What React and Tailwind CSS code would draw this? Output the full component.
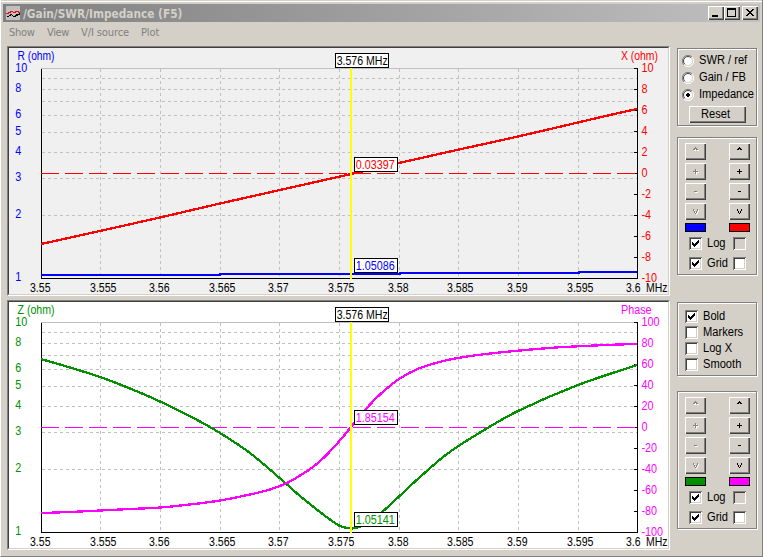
import clsx from 'clsx';

const GRID_X = [100, 160, 220, 279, 339, 399, 458, 518, 578];
const GRID_Y = [10, 21, 33, 47, 64, 84, 110, 147];

const LOG_LABELS = [
  ['10', 0, 4],
  ['8', 21, 3],
  ['6', 47, 3],
  ['5', 64, 3],
  ['4', 84, 3],
  ['3', 110, 3],
  ['2', 147, 3],
  ['1', 210, 3],
];

const FREQ_LABELS = [
  ['3.55', 30, 20.5],
  ['3.555', 90, 26.5],
  ['3.56', 149, 20.5],
  ['3.565', 209, 26.5],
  ['3.57', 268, 20.5],
  ['3.575', 328, 26.5],
  ['3.58', 388, 20.5],
  ['3.585', 447, 26.5],
  ['3.59', 507, 20.5],
  ['3.595', 567, 26.5],
  ['3.6', 626, 14.5],
  ['MHz', 646, 21.5],
];

const reactance = [[41, 244], [100, 231], [160, 217.5], [220, 203.5], [300, 185.5], [351, 174], [399, 163], [450, 151.5], [518, 136.5], [578, 122.5], [610, 115], [637, 109]];
const resistance = [[41, 275], [220, 275], [220, 274], [400, 274], [400, 273], [579, 273], [579, 272], [637, 272]];
const impedance = [[41, 359], [70, 367.5], [100, 377], [130, 388.5], [160, 401.5], [199, 421], [220, 433], [250, 453], [287, 484.5], [300, 496], [320, 512], [330, 519.5], [339, 525.5], [347, 528], [356, 528], [365, 524], [382, 512], [399, 496.5], [420, 477], [447, 454], [480, 432.5], [518, 411], [578, 385], [637, 365]];
const phase = [[41, 513], [70, 512], [100, 510.5], [130, 509], [160, 507.5], [190, 504.5], [220, 500.5], [250, 494.5], [270, 489.5], [287, 483], [300, 475.5], [313, 467], [325, 456.5], [339, 441.5], [351, 427], [365, 410], [380, 394.5], [399, 379], [420, 368], [450, 359.5], [478, 355], [520, 350.5], [556, 347.5], [578, 346.3], [610, 344.8], [637, 344]];

// Catmull-Rom through the sample points
function smooth(points) {
  let d = `M${points[0]}`;
  for (let i = 0; i < points.length - 1; i++) {
    const p0 = points[i - 1] || points[i];
    const p1 = points[i];
    const p2 = points[i + 1];
    const p3 = points[i + 2] || p2;
    const h = (p2[0] - p1[0]) / 3;
    const m1 = (p2[1] - p0[1]) / (p2[0] - p0[0]);
    const m2 = (p3[1] - p1[1]) / (p3[0] - p1[0]);
    d += `C${p1[0] + h},${p1[1] + m1 * h} ${p2[0] - h},${p2[1] - m2 * h} ${p2}`;
  }
  return d;
}

function Label({ x, y, w, fill = '#000', children }) {
  return (
    <text x={x} y={y} textLength={w} lengthAdjust="spacingAndGlyphs" fill={fill}>
      {children}
    </text>
  );
}

function Tag({ x, y, w, textWidth, fill, children }) {
  return (
    <g>
      <rect x={x + 0.5} y={y + 0.5} width={w - 1} height={14} fill="#fff" stroke="#000" />
      <Label x={x + 1.7} y={y + 12} w={textWidth} fill={fill}>{children}</Label>
    </g>
  );
}

function numWidth(s) {
  return s.startsWith('-') ? 3.6 + (s.length - 1) * 6 : s.length * 6;
}

function Plot({ top, left, right, range, curves, tags, className }) {
  return (
    <div
      className={clsx(
        'h-[250px] w-[663px] border border-t-[#808080] border-l-[#808080] border-r-white border-b-white',
        className,
      )}
    >
      <div className="h-full w-full border border-t-[#404040] border-l-[#404040] border-r-[#d4d0c8] border-b-[#d4d0c8]">
        <svg
          width="659"
          height="246"
          viewBox={`9 ${top - 20} 659 246`}
          className="block font-['Liberation_Sans',Arial,sans-serif] text-[12.5px]"
        >
          <g shapeRendering="crispEdges" strokeWidth="1" fill="none">
            <g stroke="#c0c0c0" strokeDasharray="3 3">
              {GRID_X.map((x) => (
                <line key={x} x1={x + 0.5} x2={x + 0.5} y1={top + 1} y2={top + 210} />
              ))}
              {GRID_Y.map((y) => (
                <line key={y} x1="42" x2="637" y1={top + y + 0.5} y2={top + y + 0.5} />
              ))}
            </g>
            <line x1="41" x2="637" y1={top + 0.5} y2={top + 0.5} stroke="#c0c0c0" />
            <path d={`M41.5 ${top + 1}V${top + 210.5}H637.5V${top}`} stroke="#000" />
            {range.map((v, i) => (
              <line key={v} x1="634" x2="638" y1={top + i * 21 + 0.5} y2={top + i * 21 + 0.5} stroke="#000" />
            ))}
            <line x1="41" x2="637" y1={top + 105.5} y2={top + 105.5} stroke={right.color} strokeDasharray="18 6" />
            {curves.map((c) => (
              <path key={c.color} d={c.d} stroke={c.color} strokeWidth={c.width || 2} />
            ))}
            <rect x="350" y={top} width="2" height="211" fill="#ff0" />
          </g>

          <Label x={17.5} y={top - 8} w={37} fill={left.color}>{left.title}</Label>
          <Label x={621} y={top - 8} w={right.width} fill={right.color}>{right.title}</Label>
          {LOG_LABELS.map(([s, y, dy]) => (
            <Label key={s} x={15.3} y={top + y + dy + 0.4} w={numWidth(s)} fill={left.color}>{s}</Label>
          ))}
          {range.map((v, i) => (
            <Label key={v} x={641.5} y={top + i * 21 + 3.6} w={numWidth(v)} fill={right.color}>{v}</Label>
          ))}
          {FREQ_LABELS.map(([s, x, w]) => (
            <Label key={s} x={x} y={top + 224} w={w}>{s}</Label>
          ))}
          <Tag x={335} y={top - 15} w={54} textWidth={51}>3.576 MHz</Tag>
          {tags.map((t) => (
            <Tag key={t.text} x={354} y={t.y} w={44} textWidth={39} fill={t.color}>{t.text}</Tag>
          ))}
        </svg>
      </div>
    </div>
  );
}

function Caption({ className, children }) {
  return (
    <span className={clsx('inline-block origin-left -translate-y-px scale-x-[0.89] text-[12.5px] leading-4 whitespace-nowrap', className)}>
      {children}
    </span>
  );
}

function Group({ className, children }) {
  return (
    <div
      className={clsx(
        'w-20 border border-[#808080] shadow-[1px_1px_0_#fff,inset_1px_1px_0_#fff]',
        className,
      )}
    >
      {children}
    </div>
  );
}

const raised =
  'flex items-center justify-center bg-[#d4d0c8] shadow-[inset_1px_1px_0_#fff,inset_-1px_-1px_0_#404040,inset_-2px_-2px_0_#808080]';

function Check({ checked, disabled }) {
  return (
    <span
      className={clsx(
        'block size-[13px] shrink-0 shadow-[inset_1px_1px_0_#808080,inset_-1px_-1px_0_#fff,inset_2px_2px_0_#404040,inset_-2px_-2px_0_#d4d0c8]',
        disabled ? 'bg-[#d4d0c8]' : 'bg-white',
      )}
    >
      {checked && (
        <svg width="13" height="13" shapeRendering="crispEdges">
          <path d="M3 5h1v1h1v1h1v-1h1v-1h1v-1h1v-1h1v3h-1v1h-1v1h-1v1h-1v1h-1v-1h-1v-1h-1z" />
        </svg>
      )}
    </span>
  );
}

function Radio({ selected }) {
  return (
    <svg width="12" height="12" viewBox="0 0 12 12" className="block shrink-0">
      <circle cx="6" cy="6" r="5" fill="#fff" />
      <path d="M2 10A5.5 5.5 0 0 1 10 2" fill="none" stroke="#808080" />
      <path d="M2.8 9.2A4.5 4.5 0 0 1 9.2 2.8" fill="none" stroke="#404040" />
      <path d="M10 2A5.5 5.5 0 0 1 2 10" fill="none" stroke="#fff" />
      <path d="M9.2 2.8A4.5 4.5 0 0 1 2.8 9.2" fill="none" stroke="#d4d0c8" />
      {selected && <path d="M5 4h2v1h1v2h-1v1h-2v-1h-1v-2h1z" shapeRendering="crispEdges" />}
    </svg>
  );
}

const GLYPHS = {
  up: 'M10 4h1v1h1v1h1v1h-2v-1h-1v1h-2v-1h1v-1h1z',
  plus: 'M10 6h1v2h2v1h-2v2h-1v-2h-2v-1h2z',
  minus: 'M9 8h3v1h-3z',
  down: 'M8 6h1v2h1v2h1v-2h1v-2h1v2h-1v2h-1v1h-1v-1h-1v-2h-1z',
};

function Stepper({ glyph, disabled }) {
  return (
    <button type="button" className={clsx(raised, 'h-[17px] w-[21px]')}>
      <svg width="21" height="17" shapeRendering="crispEdges">
        {disabled && <path d={GLYPHS[glyph]} fill="#fff" transform="translate(1 1)" />}
        <path d={GLYPHS[glyph]} fill={disabled ? '#808080' : '#000'} />
      </svg>
    </button>
  );
}

function ScaleGroup({ leftColor, rightColor, className }) {
  return (
    <Group className={clsx('h-[138px] pt-[5px]', className)}>
      <div className="flex flex-col gap-[3px] pl-[7px]">
        {Object.keys(GLYPHS).map((glyph) => (
          <div key={glyph} className="flex gap-[23px]">
            <Stepper glyph={glyph} disabled />
            <Stepper glyph={glyph} />
          </div>
        ))}
        <div className="flex gap-[23px]">
          <div className={clsx('h-[9px] w-[21px] border border-black', leftColor)} />
          <div className={clsx('h-[9px] w-[21px] border border-black', rightColor)} />
        </div>
      </div>
      <div className="mt-[5px] flex flex-col gap-[7px] pl-[11px]">
        {['Log', 'Grid'].map((name) => (
          <div key={name} className="flex h-[13px] items-center">
            <Check checked />
            <Caption className="ml-[5px] w-[26px]">{name}</Caption>
            <Check disabled={name === 'Log'} />
          </div>
        ))}
      </div>
    </Group>
  );
}

function TitleBar() {
  return (
    <div className="mx-[2px] flex h-[18px] items-center bg-linear-to-r from-[#808080] to-[#c0c0c0] pr-[2px] pl-[3px]">
      <svg width="14" height="14" shapeRendering="crispEdges" className="shrink-0">
        <rect width="14" height="14" fill="#c0c0c0" />
        <path d="M0 7h2v-1h2v-1h3v1h2v-1h4v1h1v1h-2v-1h-2v1h-3v-1h-2v1h-2v1h-3z" fill="#f00" />
        <path d="M1 10h2v-1h1v-1h2v1h-1v1h-2v1h-2zM6 9h1v1h2v-1h1v-1h3v-1h1v2h-2v1h-2v1h-3v-1h-1z" />
      </svg>
      <div className="ml-[3px] flex-1">
        <span className="inline-block origin-left scale-x-[0.98] font-['DejaVu_Sans_Condensed','DejaVu_Sans',sans-serif] text-[12px] leading-[18px] font-bold whitespace-nowrap text-[#d4d0c8]">
          /Gain/SWR/Impedance (F5)
        </span>
      </div>
      <button type="button" className={clsx(raised, 'h-[14px] w-4')}>
        <svg width="16" height="14" shapeRendering="crispEdges"><path d="M4 9h6v2h-6z" /></svg>
      </button>
      <button type="button" className={clsx(raised, 'h-[14px] w-4')}>
        <svg width="16" height="14" shapeRendering="crispEdges">
          <path d="M3 2h9v9h-9zM4 4v6h7v-6z" fillRule="evenodd" />
        </svg>
      </button>
      <button type="button" className={clsx(raised, 'ml-[2px] h-[14px] w-4')}>
        <svg width="16" height="14" shapeRendering="crispEdges">
          <path d="M4 3h2v1h1v1h2v-1h1v-1h2v1h-1v1h-1v1h-1v1h1v1h1v1h1v1h-2v-1h-1v-1h-2v1h-1v1h-2v-1h1v-1h1v-1h1v-1h-1v-1h-1v-1h-1z" />
        </svg>
      </button>
    </div>
  );
}

export default function App() {
  return (
    <div className="flex h-[557px] w-[763px] flex-col overflow-hidden border-r border-b border-l border-r-[#808080] border-b-[#808080] border-l-white bg-[#d4d0c8] font-['Liberation_Sans',Arial,sans-serif] text-black">
      <div className="mt-px mb-[2px] h-px shrink-0 bg-white" />
      <TitleBar />

      <nav className="flex h-6 items-center pb-[2px] pl-2 font-['DejaVu_Sans_Condensed','DejaVu_Sans',sans-serif] text-[11px] leading-5 text-[#808080]">
        <span className="w-[38px] tracking-[-0.3px]">Show</span>
        <span className="w-[34px] tracking-[-0.4px]">View</span>
        <span className="w-[60px] tracking-[-0.1px] whitespace-nowrap">V/I source</span>
        <span className="tracking-[-0.1px]">Plot</span>
      </nav>

      <div className="flex pl-[6px]">
        <main className="flex flex-col gap-1">
          <Plot
            className="bg-[#f0f0f0]"
            top={68}
            left={{ title: 'R (ohm)', color: '#0000ff' }}
            right={{ title: 'X (ohm)', color: '#ff0000', width: 37 }}
            range={['10', '8', '6', '4', '2', '0', '-2', '-4', '-6', '-8', '-10']}
            curves={[
              { color: '#ff0000', d: smooth(reactance), width: 2.3 },
              { color: '#0000ff', d: `M${resistance.join('L')}` },
            ]}
            tags={[
              { text: '0.03397', y: 157, color: '#ff0000' },
              { text: '1.05086', y: 258, color: '#0000ff' },
            ]}
          />
          <Plot
            className="bg-white"
            top={322}
            left={{ title: 'Z (ohm)', color: '#009000' }}
            right={{ title: 'Phase', color: '#ff00ff', width: 30.5 }}
            range={['100', '80', '60', '40', '20', '0', '-20', '-40', '-60', '-80', '-100']}
            curves={[
              { color: '#009000', d: smooth(impedance), width: 2.3 },
              { color: '#ff00ff', d: smooth(phase), width: 2.3 },
            ]}
            tags={[
              { text: '1.85154', y: 410, color: '#ff00ff' },
              { text: '1.05141', y: 512, color: '#009000' },
            ]}
          />
        </main>

        <aside className="ml-[7px] pt-[2px]">
          <Group className="h-[78px] pt-[3px] pl-1">
            <div className="flex h-[17px] items-center">
              <Radio />
              <Caption className="ml-[5px]">SWR / ref</Caption>
            </div>
            <div className="flex h-[18px] items-center">
              <Radio />
              <Caption className="ml-[5px]">Gain / FB</Caption>
            </div>
            <div className="flex h-4 items-center">
              <Radio selected />
              <Caption className="ml-[5px] w-14">Impedance</Caption>
            </div>
            <button type="button" className={clsx(raised, 'mt-[3px] ml-[7px] h-[17px] w-[57px]')}>
              <Caption className="origin-center">Reset</Caption>
            </button>
          </Group>

          <ScaleGroup className="mt-[11px]" leftColor="bg-[#0000ff]" rightColor="bg-[#ff0000]" />

          <Group className="mt-[27px] flex h-[74px] flex-col gap-[3px] pt-[7px] pl-[7px]">
            {['Bold', 'Markers', 'Log X', 'Smooth'].map((name) => (
              <div key={name} className="flex h-[13px] items-center">
                <Check checked={name === 'Bold'} />
                <Caption className="ml-[5px]">{name}</Caption>
              </div>
            ))}
          </Group>

          <ScaleGroup className="mt-[15px]" leftColor="bg-[#009000]" rightColor="bg-[#ff00ff]" />
        </aside>
      </div>
    </div>
  );
}
